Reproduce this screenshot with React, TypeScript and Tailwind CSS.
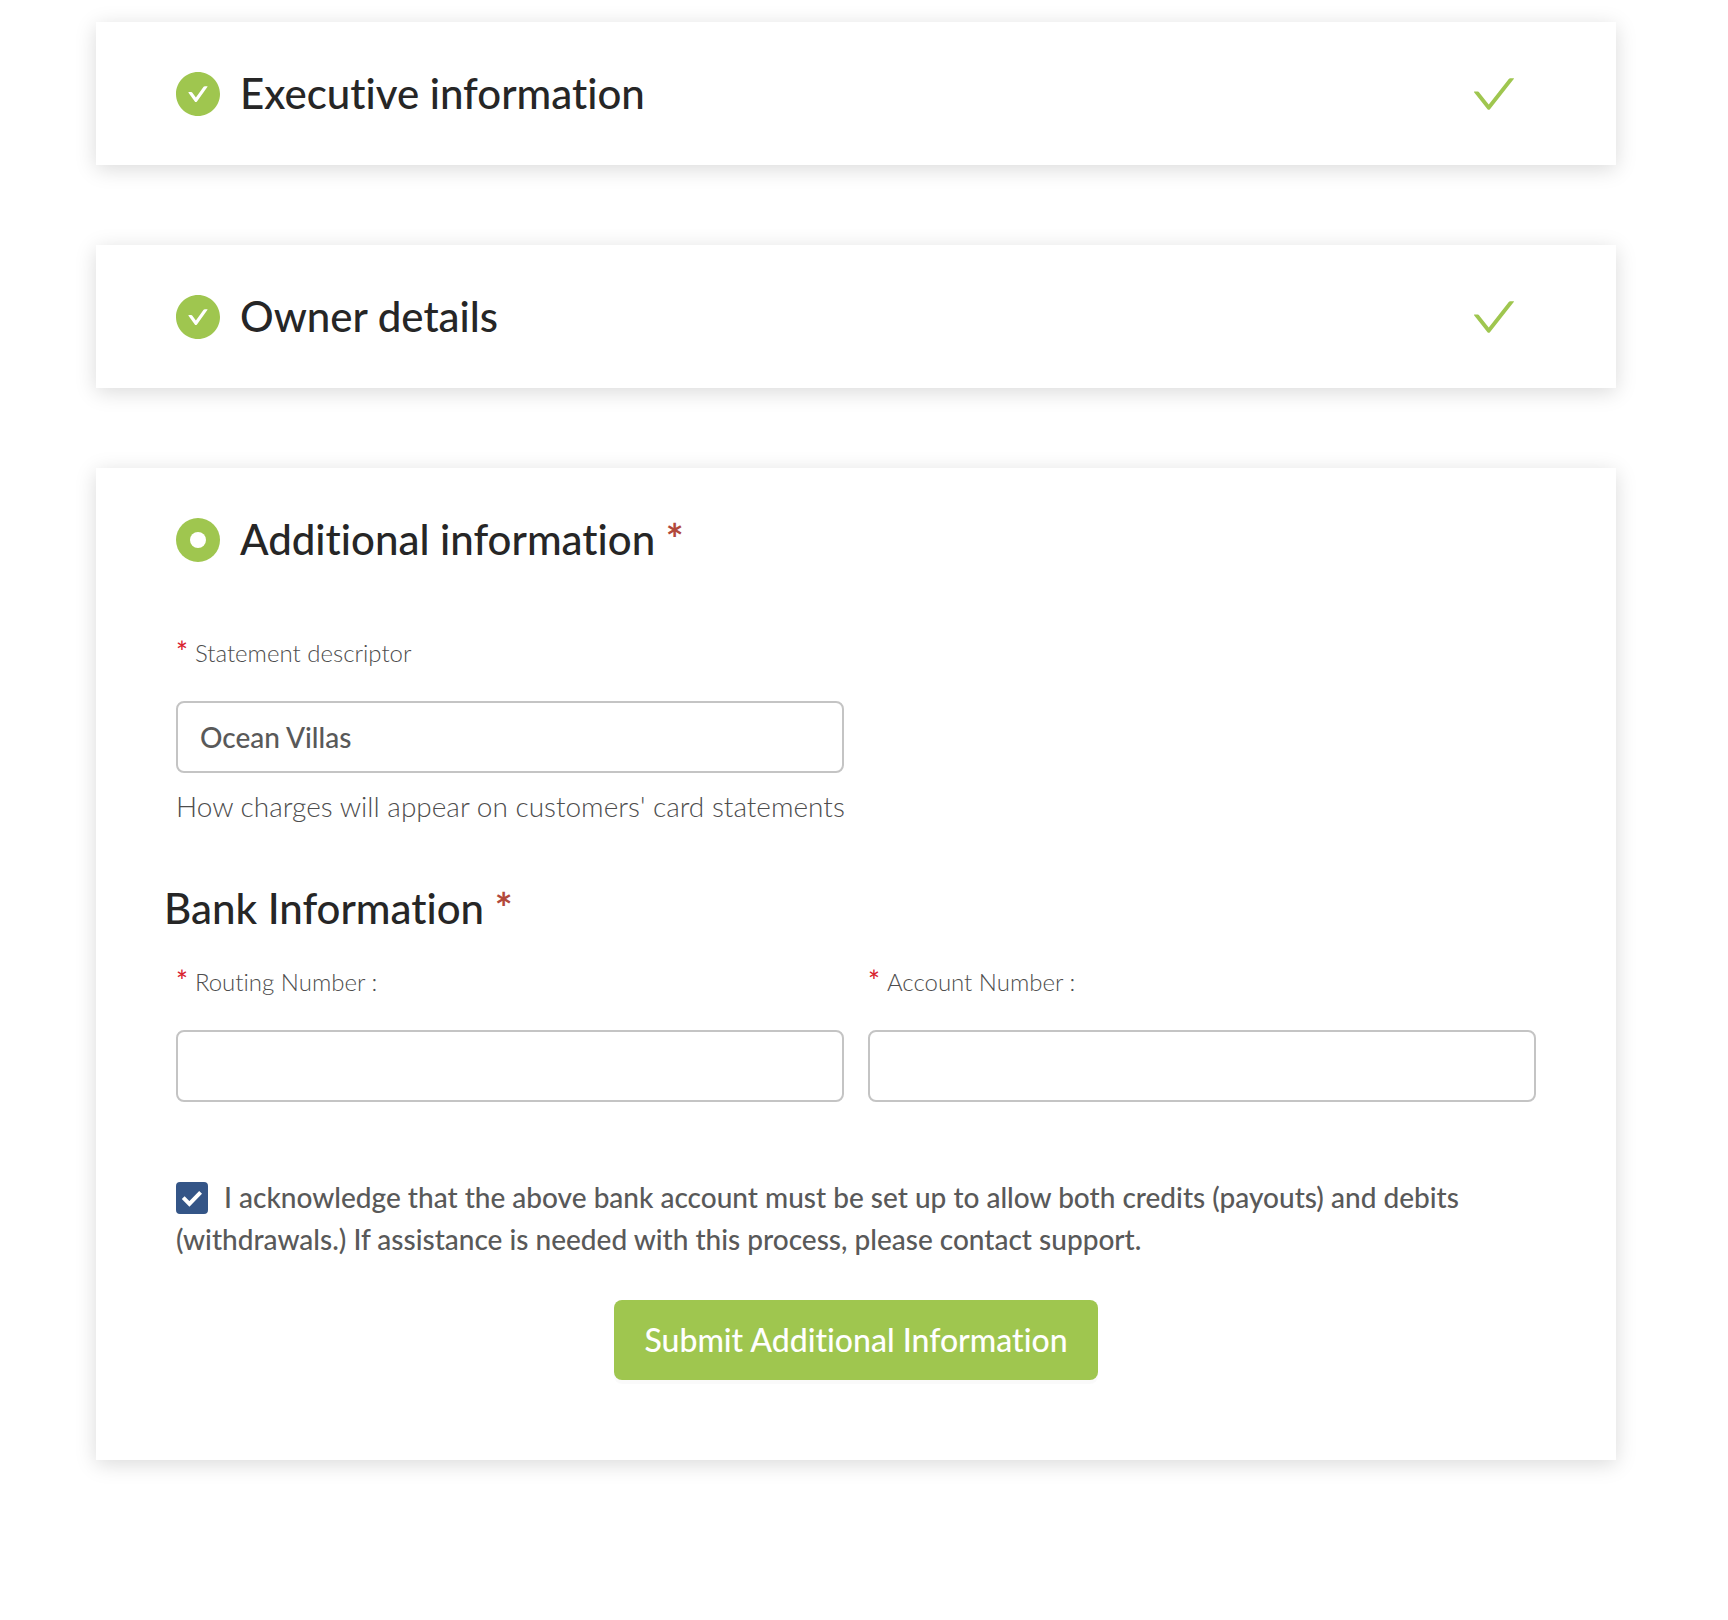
import { useState, FormEvent, ReactNode } from "react";
import clsx from "clsx";

const CheckIcon = () => (
  <svg viewBox="64 64 896 896" className="size-11 text-[#9fc64f]" fill="currentColor" aria-hidden="true">
    <path d="M912 190h-69.9c-9.8 0-19.1 4.5-25.1 12.2L404.7 724.5 207 474a32 32 0 00-25.1-12.2H112c-6.7 0-10.4 7.7-6.3 12.9l273.9 347c12.8 16.2 37.4 16.2 50.3 0l488.4-618.9c4.1-5.1.4-12.8-6.3-12.8z" />
  </svg>
);

const CheckCircleIcon = () => (
  <svg viewBox="64 64 896 896" className="size-11 shrink-0 text-[#9fc64f]" fill="currentColor" aria-hidden="true">
    <path d="M512 64C264.6 64 64 264.6 64 512s200.6 448 448 448 448-200.6 448-448S759.4 64 512 64zm193.5 301.7l-210.6 292a31.8 31.8 0 01-51.7 0L318.5 484.9c-3.8-5.3 0-12.7 6.5-12.7h46.9c10.2 0 19.9 4.9 25.9 13.3l71.2 98.8 157.2-218c6-8.3 15.6-13.3 25.9-13.3H699c6.5 0 10.3 7.4 6.5 12.7z" />
  </svg>
);

const CurrentStepIcon = () => (
  <svg viewBox="0 0 44 44" className="size-11 shrink-0" aria-hidden="true">
    <circle cx="22" cy="22" r="22" fill="#9fc64f" />
    <circle cx="22" cy="22" r="8" fill="#fff" />
  </svg>
);

const Required = () => <span className="font-bold text-[#b2493b]">*</span>;

interface StepCardProps {
  title: string;
  done?: boolean;
  children?: ReactNode;
}

const StepCard = ({ title, done, children }: StepCardProps) => (
  <section
    className={clsx(
      "bg-white px-20 pt-[50px] shadow-[0_4px_20px_rgba(0,0,0,0.15)]",
      done ? "pb-[49px]" : "pb-20"
    )}
  >
    <div className="flex items-start gap-5">
      {done ? <CheckCircleIcon /> : <CurrentStepIcon />}
      <h2 className="grow text-[42px] leading-[42px] font-medium text-[#262626]">
        {title} {!done && <Required />}
      </h2>
      {done && (
        <div className="pr-5">
          <CheckIcon />
        </div>
      )}
    </div>
    {children}
  </section>
);

interface FieldProps {
  id: string;
  label: string;
  value: string;
  onChange: (value: string) => void;
  help?: string;
}

const Field = ({ id, label, value, onChange, help }: FieldProps) => (
  <div>
    <label htmlFor={id} className="flex gap-[7px] text-2xl leading-10 font-light text-[#4d4d4d]">
      <span className="text-[28px] leading-9 font-medium text-[#d9232e]">*</span>
      {label}
    </label>
    <input
      id={id}
      type="text"
      value={value}
      onChange={(e) => onChange(e.target.value)}
      className="mt-7 block h-18 w-full rounded-lg border-2 border-[#c4c4c4] bg-white px-[22px] text-[28px] font-medium text-[#595959] outline-none"
    />
    {help && (
      <p className="mt-3 text-[28px] leading-[42px] font-light whitespace-nowrap text-[#4d4d4d]">{help}</p>
    )}
  </div>
);

const App = () => {
  const [descriptor, setDescriptor] = useState("Ocean Villas");
  const [routing, setRouting] = useState("");
  const [account, setAccount] = useState("");
  const [acknowledged, setAcknowledged] = useState(true);

  const handleSubmit = (e: FormEvent) => {
    e.preventDefault();
  };

  return (
    <main className="flex min-h-screen flex-col gap-20 bg-white pt-[22px] pr-28 pb-40 pl-24 font-['Lato',sans-serif] [font-variant-ligatures:none]">
      <StepCard title="Executive information" done />
      <StepCard title="Owner details" done />
      <StepCard title="Additional information">
        <form onSubmit={handleSubmit} className="mt-[71px]">
          <div className="grid grid-cols-2 gap-6">
            <Field
              id="descriptor"
              label="Statement descriptor"
              value={descriptor}
              onChange={setDescriptor}
              help="How charges will appear on customers' card statements"
            />
          </div>

          <h2 className="mt-[60px] -ml-3 text-[42px] leading-[42px] font-medium text-[#262626]">
            Bank Information <Required />
          </h2>
          <div className="mt-[33px] grid grid-cols-2 gap-6">
            <Field id="routing" label="Routing Number :" value={routing} onChange={setRouting} />
            <Field id="account" label="Account Number :" value={account} onChange={setAccount} />
          </div>

          <label
            htmlFor="acknowledge"
            className="mt-[74px] block text-[28px] leading-[42px] font-medium text-[#595959]"
          >
            <span className="mr-4 inline-grid size-8 align-text-bottom">
              <input
                id="acknowledge"
                type="checkbox"
                checked={acknowledged}
                onChange={(e) => setAcknowledged(e.target.checked)}
                className="peer col-start-1 row-start-1 size-8 appearance-none rounded-sm border-2 border-[#345587] checked:bg-[#345587]"
              />
              <svg
                viewBox="0 0 32 32"
                className="pointer-events-none invisible col-start-1 row-start-1 size-8 peer-checked:visible"
                fill="none"
                stroke="#fff"
                strokeWidth="4"
                aria-hidden="true"
              >
                <path d="M7.2 15.6l6.2 6.2L24.6 10.4" />
              </svg>
            </span>
            I acknowledge that the above bank account must be set up to allow both credits (payouts) and debits
            (withdrawals.) If assistance is needed with this process, please contact support.
          </label>

          <div className="mt-10 flex justify-center">
            <button
              type="submit"
              className="h-20 rounded-lg bg-[#9fc64f] px-[30px] text-[32px] font-medium text-white shadow-[0_4px_0_rgba(0,0,0,0.02)]"
            >
              Submit Additional Information
            </button>
          </div>
        </form>
      </StepCard>
    </main>
  );
};

export default App;
